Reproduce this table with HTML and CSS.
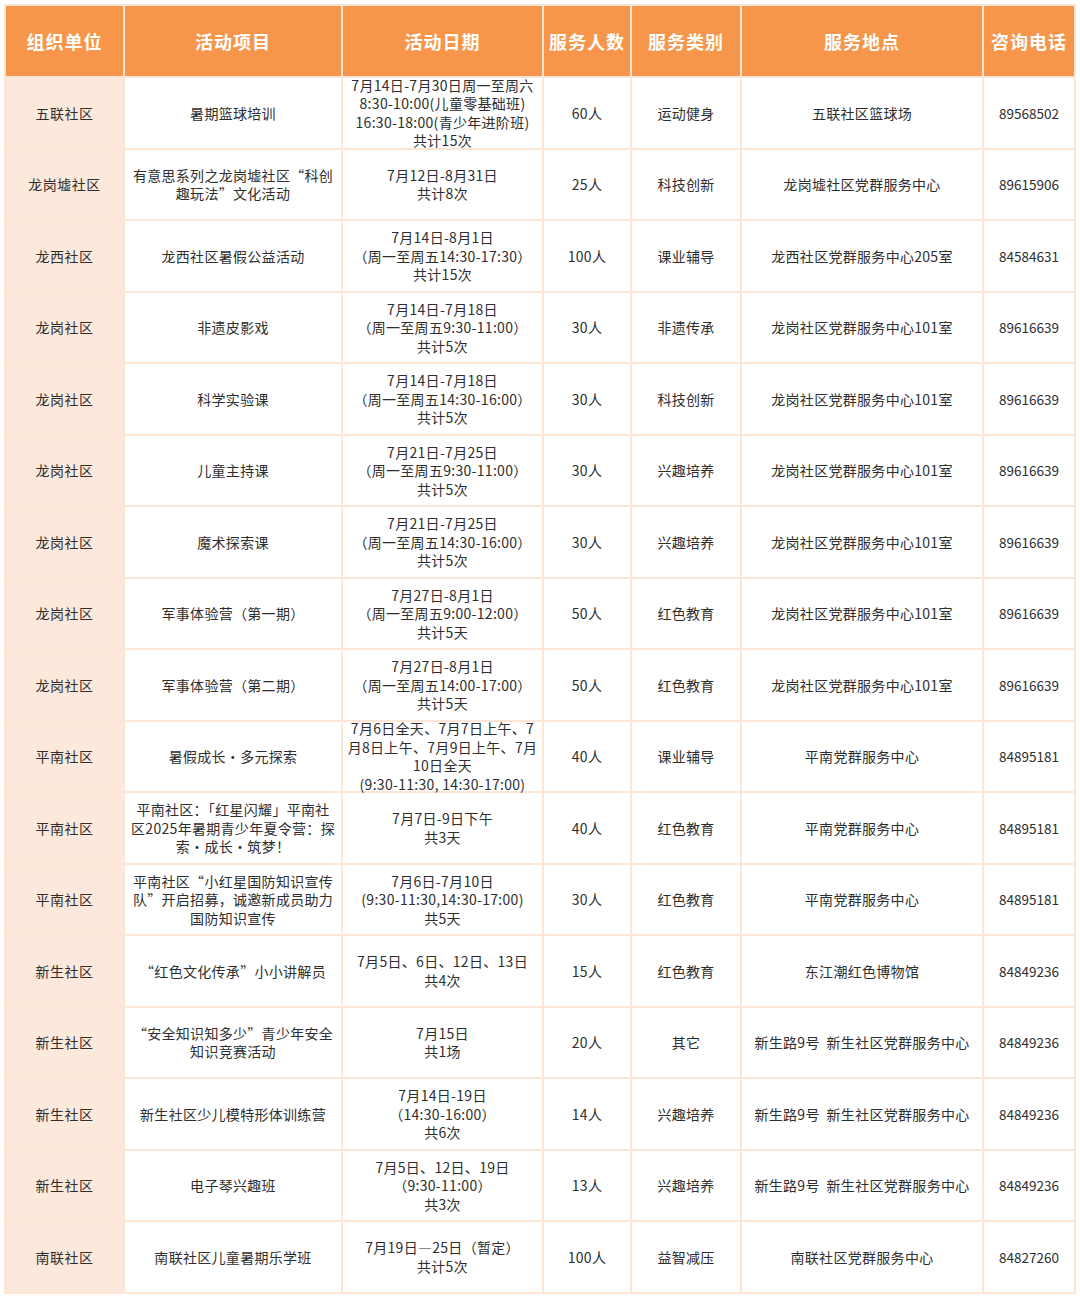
FILE: index.html
```html
<!DOCTYPE html>
<html lang="zh-CN">
<head>
<meta charset="utf-8">
<title>暑期活动表</title>
<link rel="stylesheet" href="styles.css">
</head>
<body>
<div class="table">
  <div class="th">组织单位</div><div class="th">活动项目</div><div class="th">活动日期</div><div class="th">服务人数</div><div class="th">服务类别</div><div class="th">服务地点</div><div class="th">咨询电话</div>

  <div class="td org">五联社区</div><div class="td">暑期篮球培训</div><div class="td">7月14日-7月30日周一至周六<br>8:30-10:00(儿童零基础班)<br>16:30-18:00(青少年进阶班)<br>共计15次</div><div class="td">60人</div><div class="td">运动健身</div><div class="td">五联社区篮球场</div><div class="td tel">89568502</div>

  <div class="td org">龙岗墟社区</div><div class="td">有意思系列之龙岗墟社区“科创<br>趣玩法”文化活动</div><div class="td">7月12日-8月31日<br>共计8次</div><div class="td">25人</div><div class="td">科技创新</div><div class="td">龙岗墟社区党群服务中心</div><div class="td tel">89615906</div>

  <div class="td org">龙西社区</div><div class="td">龙西社区暑假公益活动</div><div class="td">7月14日-8月1日<br>（周一至周五14:30-17:30）<br>共计15次</div><div class="td">100人</div><div class="td">课业辅导</div><div class="td">龙西社区党群服务中心205室</div><div class="td tel">84584631</div>

  <div class="td org">龙岗社区</div><div class="td">非遗皮影戏</div><div class="td">7月14日-7月18日<br>（周一至周五9:30-11:00）<br>共计5次</div><div class="td">30人</div><div class="td">非遗传承</div><div class="td">龙岗社区党群服务中心101室</div><div class="td tel">89616639</div>

  <div class="td org">龙岗社区</div><div class="td">科学实验课</div><div class="td">7月14日-7月18日<br>（周一至周五14:30-16:00）<br>共计5次</div><div class="td">30人</div><div class="td">科技创新</div><div class="td">龙岗社区党群服务中心101室</div><div class="td tel">89616639</div>

  <div class="td org">龙岗社区</div><div class="td">儿童主持课</div><div class="td">7月21日-7月25日<br>（周一至周五9:30-11:00）<br>共计5次</div><div class="td">30人</div><div class="td">兴趣培养</div><div class="td">龙岗社区党群服务中心101室</div><div class="td tel">89616639</div>

  <div class="td org">龙岗社区</div><div class="td">魔术探索课</div><div class="td">7月21日-7月25日<br>（周一至周五14:30-16:00）<br>共计5次</div><div class="td">30人</div><div class="td">兴趣培养</div><div class="td">龙岗社区党群服务中心101室</div><div class="td tel">89616639</div>

  <div class="td org">龙岗社区</div><div class="td">军事体验营（第一期）</div><div class="td">7月27日-8月1日<br>（周一至周五9:00-12:00）<br>共计5天</div><div class="td">50人</div><div class="td">红色教育</div><div class="td">龙岗社区党群服务中心101室</div><div class="td tel">89616639</div>

  <div class="td org">龙岗社区</div><div class="td">军事体验营（第二期）</div><div class="td">7月27日-8月1日<br>（周一至周五14:00-17:00）<br>共计5天</div><div class="td">50人</div><div class="td">红色教育</div><div class="td">龙岗社区党群服务中心101室</div><div class="td tel">89616639</div>

  <div class="td org">平南社区</div><div class="td">暑假成长·多元探索</div><div class="td">7月6日全天、7月7日上午、7<br>月8日上午、7月9日上午、7月<br>10日全天<br>(9:30-11:30, 14:30-17:00)</div><div class="td">40人</div><div class="td">课业辅导</div><div class="td">平南党群服务中心</div><div class="td tel">84895181</div>

  <div class="td org">平南社区</div><div class="td">平南社区：「红星闪耀」平南社<br>区2025年暑期青少年夏令营：探<br>索·成长·筑梦！</div><div class="td">7月7日-9日下午<br>共3天</div><div class="td">40人</div><div class="td">红色教育</div><div class="td">平南党群服务中心</div><div class="td tel">84895181</div>

  <div class="td org">平南社区</div><div class="td">平南社区“小红星国防知识宣传<br>队”开启招募，诚邀新成员助力<br>国防知识宣传</div><div class="td">7月6日-7月10日<br>(9:30-11:30,14:30-17:00)<br>共5天</div><div class="td">30人</div><div class="td">红色教育</div><div class="td">平南党群服务中心</div><div class="td tel">84895181</div>

  <div class="td org">新生社区</div><div class="td">“红色文化传承”小小讲解员</div><div class="td">7月5日、6日、12日、13日<br>共4次</div><div class="td">15人</div><div class="td">红色教育</div><div class="td">东江潮红色博物馆</div><div class="td tel">84849236</div>

  <div class="td org">新生社区</div><div class="td">“安全知识知多少”青少年安全<br>知识竞赛活动</div><div class="td">7月15日<br>共1场</div><div class="td">20人</div><div class="td">其它</div><div class="td">新生路9号&nbsp; 新生社区党群服务中心</div><div class="td tel">84849236</div>

  <div class="td org">新生社区</div><div class="td">新生社区少儿模特形体训练营</div><div class="td">7月14日-19日<br>（14:30-16:00）<br>共6次</div><div class="td">14人</div><div class="td">兴趣培养</div><div class="td">新生路9号&nbsp; 新生社区党群服务中心</div><div class="td tel">84849236</div>

  <div class="td org">新生社区</div><div class="td">电子琴兴趣班</div><div class="td">7月5日、12日、19日<br>（9:30-11:00）<br>共3次</div><div class="td">13人</div><div class="td">兴趣培养</div><div class="td">新生路9号&nbsp; 新生社区党群服务中心</div><div class="td tel">84849236</div>

  <div class="td org">南联社区</div><div class="td">南联社区儿童暑期乐学班</div><div class="td">7月19日—25日（暂定）<br>共计5次</div><div class="td">100人</div><div class="td">益智减压</div><div class="td">南联社区党群服务中心</div><div class="td tel">84827260</div>
</div>
</body>
</html>
```

FILE: styles.css
```css
html, body {
  margin: 0;
  padding: 0;
  background: #ffffff;
}

body {
  font-family: "Noto Sans CJK SC", "Noto Sans", sans-serif;
  color: #2e2e2e;
}

.table {
  margin: 4px;
  width: 1072px;
  box-sizing: border-box;
  padding: 2px;
  background: #fde6d6;
  display: grid;
  grid-template-columns: 117px 216px 199px 86px 108px 240px 90px;
  grid-template-rows: 70px repeat(17, 69.5px);
  gap: 2px;
}

.th {
  background: #f7964a;
  color: #ffffff;
  font-size: 18px;
  font-weight: 700;
  letter-spacing: 1px;
  display: flex;
  align-items: center;
  justify-content: center;
  text-align: center;
  white-space: nowrap;
}

.td {
  background: #ffffff;
  font-size: 14px;
  letter-spacing: 0.3px;
  line-height: 18.5px;
  display: flex;
  align-items: center;
  justify-content: center;
  text-align: center;
  white-space: nowrap;
  overflow: visible;
}

.td.org {
  background: #fde9db;
  letter-spacing: 0.5px;
}

.td.tel {
  font-size: 13.5px;
  letter-spacing: 0;
}
```
